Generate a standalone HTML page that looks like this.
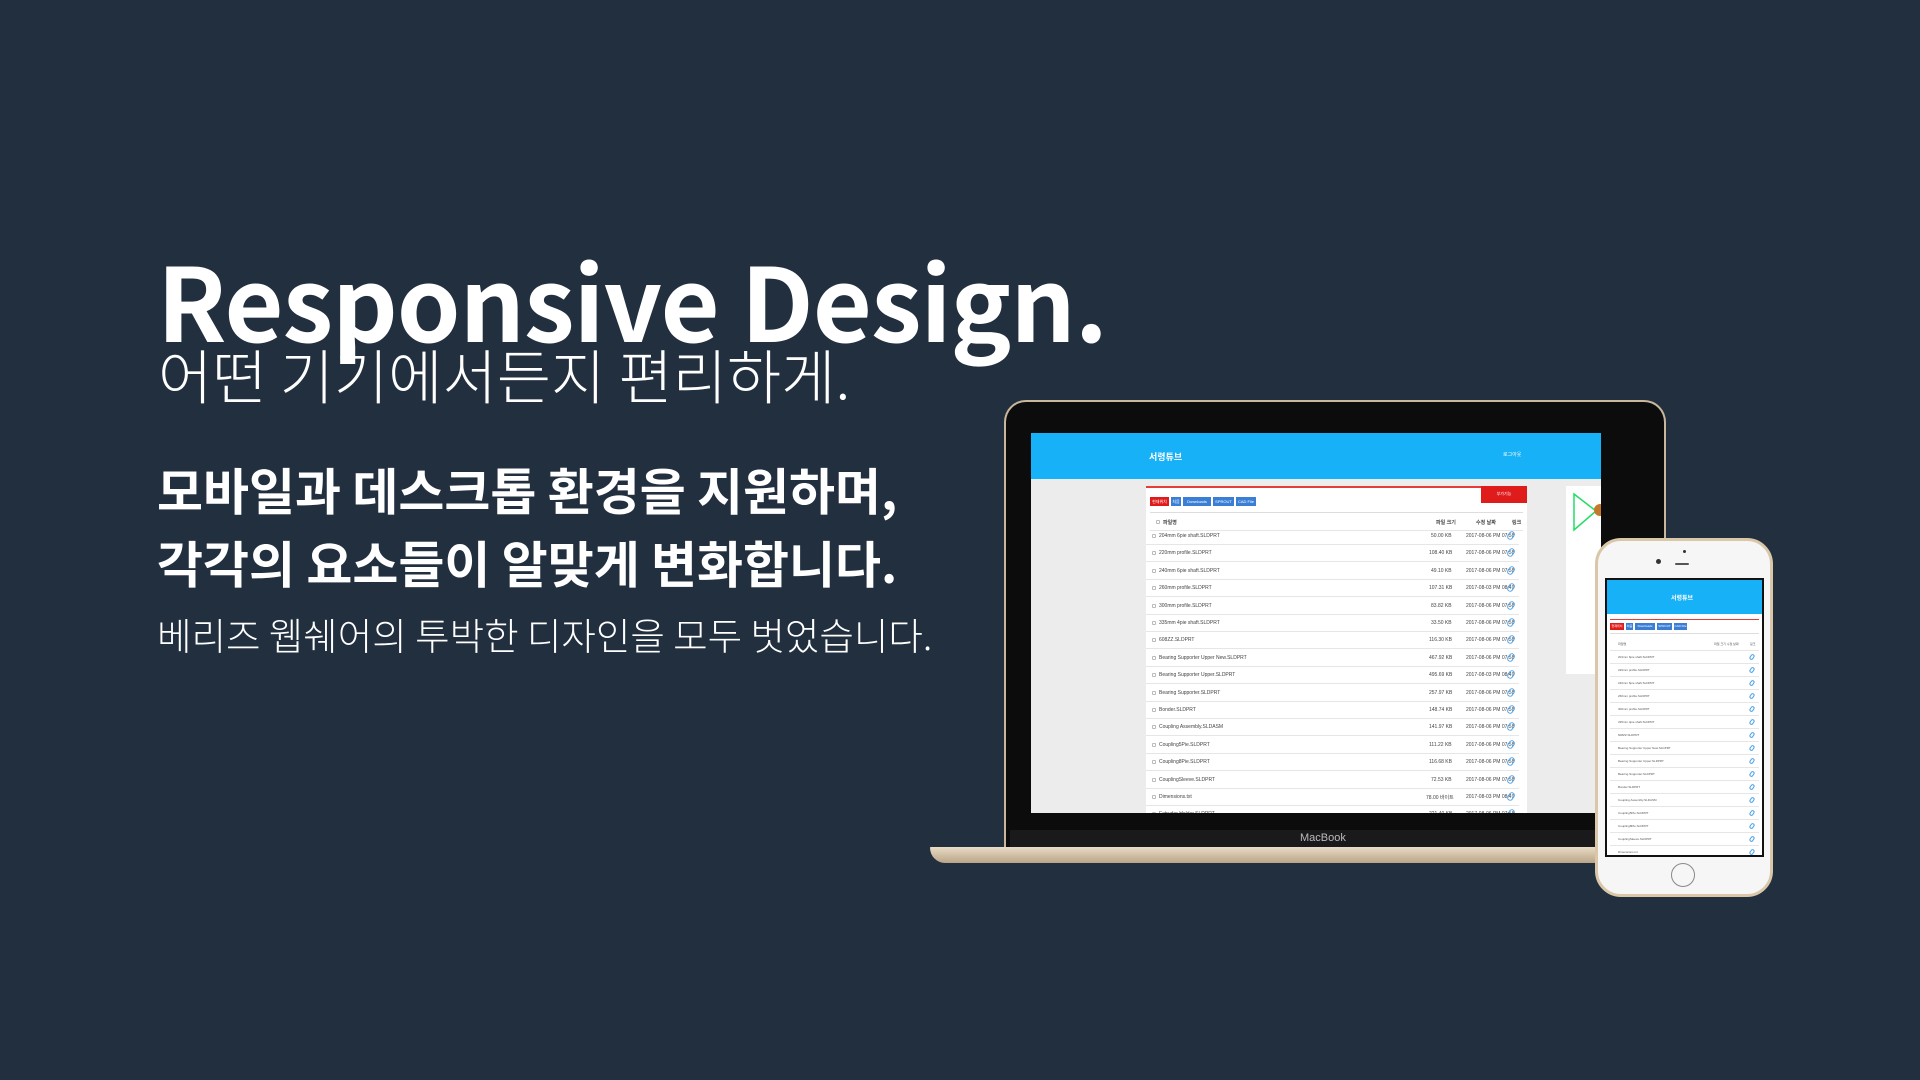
<!DOCTYPE html>
<html><head><meta charset="utf-8"><style>
*{margin:0;padding:0;box-sizing:border-box}
body{width:1920px;height:1080px;background:#222f3f;overflow:hidden;position:relative;font-family:"Liberation Sans","Noto Sans CJK KR",sans-serif;color:#fff}
.a{position:absolute;white-space:nowrap}
.k{font-family:"Noto Sans CJK KR","Liberation Sans",sans-serif}
.row{position:absolute;left:0;right:0;height:17px;border-bottom:1px solid #e6e6e6;font-size:5px;color:#444;font-family:"Liberation Sans",sans-serif}
.row span{position:absolute;top:5px}
.cb{position:absolute;left:6px;top:6px;width:4px;height:4px;border:1px solid #bbb;border-radius:1px}
.lk{position:absolute;top:3px;width:6px;height:9px;border:1.5px solid #4da3e8;border-radius:3px;transform:rotate(35deg)}
.prow{position:absolute;left:0;right:0;height:13px;border-bottom:1px solid #e6e6e6;font-size:3px;color:#555}
.prow span{position:absolute;top:4px}
.tab{position:absolute;top:0;height:9px;font-size:4px;color:#fff;line-height:9px;text-align:center;background:#3a7fd5}
</style></head><body>

<div class="a k" style="left:157px;top:238px;font-size:102px;font-weight:700;letter-spacing:-1px;line-height:1.2">Responsive Design.</div>
<div class="a k" style="left:158px;top:339px;font-size:59px;font-weight:300;line-height:1.2">어떤 기기에서든지 편리하게.</div>
<div class="a k" style="left:157px;top:459px;font-size:50px;font-weight:700;line-height:1.2">모바일과 데스크톱 환경을 지원하며,</div>
<div class="a k" style="left:157px;top:532px;font-size:50px;font-weight:700;line-height:1.2">각각의 요소들이 알맞게 변화합니다.</div>
<div class="a k" style="left:157px;top:611px;font-size:37.5px;font-weight:300;line-height:1.2">베리즈 웹쉐어의 투박한 디자인을 모두 벗었습니다.</div>

<!-- laptop -->
<div class="a" style="left:1004px;top:400px;width:662px;height:450px;background:#0c0c0d;border:2px solid #c9b79c;border-radius:22px 22px 0 0;border-bottom:none"></div>
<div class="a" style="left:1010px;top:830px;width:650px;height:18px;background:#1a1a1c"></div>
<div class="a" style="left:1300px;top:832px;font-size:11px;color:#bbb">MacBook</div>
<div class="a" style="left:930px;top:847px;width:680px;height:16px;background:linear-gradient(#e9dcc6,#b9a487);border-radius:2px 2px 40px 40px"></div>
<div class="a" style="left:1031px;top:433px;width:570px;height:380px;background:#ececec;overflow:hidden">
  <div class="a" style="left:0;top:0;width:570px;height:46px;background:#17b1f8"></div>
  <div class="a k" style="left:118px;top:17px;font-size:9px;font-weight:700">서령튜브</div>
  <div class="a k" style="left:472px;top:18px;font-size:5px">로그아웃</div>
  <div class="a" style="left:115px;top:53px;width:381px;height:340px;background:#fff;border-top:2px solid #e83c3c">
    <div class="a k" style="right:0;top:-2px;width:46px;height:17px;background:#e01b1b;font-size:4px;text-align:center;line-height:17px">부가기능</div>
    <div class="a" style="left:4px;top:9px;width:300px;height:9px">
      <div class="tab" style="left:0;width:19px;background:#e01b1b">현재위치</div>
      <div class="tab" style="left:21px;width:10px">처음</div>
      <div class="tab" style="left:33px;width:28px">Downloads</div>
      <div class="tab" style="left:63px;width:21px">SPROUT</div>
      <div class="tab" style="left:86px;width:20px">CAD File</div>
    </div>
    <div class="a" style="left:4px;top:24px;width:373px;height:1px;background:#ddd"></div>
    <div class="row" style="top:26px;left:4px;right:4px;font-weight:bold"><i class="cb"></i><span style="left:13px">파일명</span><span style="left:286px">파일 크기</span><span style="left:326px">수정 날짜</span><span style="left:362px">링크</span></div>
  </div>
  <div class="a" style="left:535px;top:53px;width:46px;height:188px;background:#fff"><svg width="46" height="60"><path d="M8 8 L30 25 L8 44 Z" fill="none" stroke="#2d6" stroke-width="1.5"/><circle cx="34" cy="24" r="6" fill="#c47a2a"/></svg></div>
</div>
<div class="a" style="left:1146px;top:528px;width:373px;height:285px;overflow:hidden">
<div class="row" style="top:0"><i class="cb"></i><span style="left:13px">204mm 6pie shaft.SLDPRT</span><span style="left:285px">50.00 KB</span><span style="left:320px">2017-08-06 PM 07:58</span><i class="lk" style="left:362px"></i></div>
<div class="row" style="top:17.4px"><i class="cb"></i><span style="left:13px">220mm profile.SLDPRT</span><span style="left:283px">108.40 KB</span><span style="left:320px">2017-08-06 PM 07:58</span><i class="lk" style="left:362px"></i></div>
<div class="row" style="top:34.8px"><i class="cb"></i><span style="left:13px">240mm 6pie shaft.SLDPRT</span><span style="left:285px">49.10 KB</span><span style="left:320px">2017-08-06 PM 07:58</span><i class="lk" style="left:362px"></i></div>
<div class="row" style="top:52.2px"><i class="cb"></i><span style="left:13px">260mm profile.SLDPRT</span><span style="left:283px">107.31 KB</span><span style="left:320px">2017-08-03 PM 08:49</span><i class="lk" style="left:362px"></i></div>
<div class="row" style="top:69.6px"><i class="cb"></i><span style="left:13px">300mm profile.SLDPRT</span><span style="left:285px">83.82 KB</span><span style="left:320px">2017-08-06 PM 07:58</span><i class="lk" style="left:362px"></i></div>
<div class="row" style="top:87px"><i class="cb"></i><span style="left:13px">335mm 4pie shaft.SLDPRT</span><span style="left:285px">33.50 KB</span><span style="left:320px">2017-08-06 PM 07:58</span><i class="lk" style="left:362px"></i></div>
<div class="row" style="top:104.4px"><i class="cb"></i><span style="left:13px">608ZZ.SLDPRT</span><span style="left:283px">116.30 KB</span><span style="left:320px">2017-08-06 PM 07:58</span><i class="lk" style="left:362px"></i></div>
<div class="row" style="top:121.8px"><i class="cb"></i><span style="left:13px">Bearing Supporter Upper New.SLDPRT</span><span style="left:283px">467.92 KB</span><span style="left:320px">2017-08-06 PM 07:58</span><i class="lk" style="left:362px"></i></div>
<div class="row" style="top:139.2px"><i class="cb"></i><span style="left:13px">Bearing Supporter Upper.SLDPRT</span><span style="left:283px">495.69 KB</span><span style="left:320px">2017-08-03 PM 08:49</span><i class="lk" style="left:362px"></i></div>
<div class="row" style="top:156.6px"><i class="cb"></i><span style="left:13px">Bearing Supporter.SLDPRT</span><span style="left:283px">257.97 KB</span><span style="left:320px">2017-08-06 PM 07:58</span><i class="lk" style="left:362px"></i></div>
<div class="row" style="top:174px"><i class="cb"></i><span style="left:13px">Bonder.SLDPRT</span><span style="left:283px">148.74 KB</span><span style="left:320px">2017-08-06 PM 07:58</span><i class="lk" style="left:362px"></i></div>
<div class="row" style="top:191.4px"><i class="cb"></i><span style="left:13px">Coupling Assembly.SLDASM</span><span style="left:283px">141.97 KB</span><span style="left:320px">2017-08-06 PM 07:58</span><i class="lk" style="left:362px"></i></div>
<div class="row" style="top:208.8px"><i class="cb"></i><span style="left:13px">Coupling5Pie.SLDPRT</span><span style="left:283px">111.22 KB</span><span style="left:320px">2017-08-06 PM 07:58</span><i class="lk" style="left:362px"></i></div>
<div class="row" style="top:226.2px"><i class="cb"></i><span style="left:13px">Coupling8Pie.SLDPRT</span><span style="left:283px">116.68 KB</span><span style="left:320px">2017-08-06 PM 07:58</span><i class="lk" style="left:362px"></i></div>
<div class="row" style="top:243.6px"><i class="cb"></i><span style="left:13px">CouplingSleeve.SLDPRT</span><span style="left:285px">72.53 KB</span><span style="left:320px">2017-08-06 PM 07:58</span><i class="lk" style="left:362px"></i></div>
<div class="row" style="top:261px"><i class="cb"></i><span style="left:13px">Dimensions.txt</span><span style="left:280px">78.00 바이트</span><span style="left:320px">2017-08-03 PM 08:49</span><i class="lk" style="left:362px"></i></div>
<div class="row" style="top:278.4px"><i class="cb"></i><span style="left:13px">Extruder Holder.SLDPRT</span><span style="left:283px">221.40 KB</span><span style="left:320px">2017-08-06 PM 07:58</span><i class="lk" style="left:362px"></i></div>
</div>

<!-- phone -->
<div class="a" style="left:1595px;top:538px;width:178px;height:359px;background:#f6f6f6;border:3px solid #d9c7a8;border-radius:26px"></div>
<div class="a" style="left:1675px;top:563px;width:14px;height:2px;background:#555;border-radius:1px"></div>
<div class="a" style="left:1683px;top:550px;width:3px;height:3px;background:#333;border-radius:50%"></div>
<div class="a" style="left:1656px;top:559px;width:5px;height:5px;background:#333;border-radius:50%"></div>
<div class="a" style="left:1671px;top:863px;width:24px;height:24px;border:1.5px solid #888;border-radius:50%"></div>
<div class="a" style="left:1605px;top:578px;width:159px;height:279px;background:#fff;border:2px solid #111;overflow:hidden">
  <div class="a" style="left:0;top:0;width:155px;height:34px;background:#17b1f8"></div>
  <div class="a k" style="left:64px;top:13px;font-size:6px;font-weight:700">서령튜브</div>
  <div class="a" style="left:3px;top:39px;width:149px;height:1px;background:#e83c3c"></div>
  <div class="a" style="left:3px;top:43px;width:150px;height:9px">
    <div class="tab" style="left:0;width:14px;height:7px;line-height:7px;font-size:3px;background:#e01b1b">현재위치</div>
    <div class="tab" style="left:16px;width:7px;height:7px;line-height:7px;font-size:3px">처음</div>
    <div class="tab" style="left:25px;width:20px;height:7px;line-height:7px;font-size:3px">Downloads</div>
    <div class="tab" style="left:47px;width:15px;height:7px;line-height:7px;font-size:3px">SPROUT</div>
    <div class="tab" style="left:64px;width:13px;height:7px;line-height:7px;font-size:3px">CAD File</div>
  </div>
  <div class="a" style="left:3px;top:53px;width:149px;height:1px;background:#ddd"></div>
  <div class="a" style="left:3px;top:58px;width:149px;height:220px">
    <div class="prow" style="top:0"><span style="left:8px">파일명</span><span style="left:104px">파일 크기 수정 날짜</span><span style="left:140px">링크</span></div>
    <div class="prow" style="top:13px"><span style="left:8px">204mm 6pie shaft.SLDPRT</span><i class="lk" style="left:140px;width:4px;height:6px;top:3px;border-width:1px"></i></div>
    <div class="prow" style="top:26px"><span style="left:8px">220mm profile.SLDPRT</span><i class="lk" style="left:140px;width:4px;height:6px;top:3px;border-width:1px"></i></div>
    <div class="prow" style="top:39px"><span style="left:8px">240mm 6pie shaft.SLDPRT</span><i class="lk" style="left:140px;width:4px;height:6px;top:3px;border-width:1px"></i></div>
    <div class="prow" style="top:52px"><span style="left:8px">260mm profile.SLDPRT</span><i class="lk" style="left:140px;width:4px;height:6px;top:3px;border-width:1px"></i></div>
    <div class="prow" style="top:65px"><span style="left:8px">300mm profile.SLDPRT</span><i class="lk" style="left:140px;width:4px;height:6px;top:3px;border-width:1px"></i></div>
    <div class="prow" style="top:78px"><span style="left:8px">335mm 4pie shaft.SLDPRT</span><i class="lk" style="left:140px;width:4px;height:6px;top:3px;border-width:1px"></i></div>
    <div class="prow" style="top:91px"><span style="left:8px">608ZZ.SLDPRT</span><i class="lk" style="left:140px;width:4px;height:6px;top:3px;border-width:1px"></i></div>
    <div class="prow" style="top:104px"><span style="left:8px">Bearing Supporter Upper New.SLDPRT</span><i class="lk" style="left:140px;width:4px;height:6px;top:3px;border-width:1px"></i></div>
    <div class="prow" style="top:117px"><span style="left:8px">Bearing Supporter Upper.SLDPRT</span><i class="lk" style="left:140px;width:4px;height:6px;top:3px;border-width:1px"></i></div>
    <div class="prow" style="top:130px"><span style="left:8px">Bearing Supporter.SLDPRT</span><i class="lk" style="left:140px;width:4px;height:6px;top:3px;border-width:1px"></i></div>
    <div class="prow" style="top:143px"><span style="left:8px">Bonder.SLDPRT</span><i class="lk" style="left:140px;width:4px;height:6px;top:3px;border-width:1px"></i></div>
    <div class="prow" style="top:156px"><span style="left:8px">Coupling Assembly.SLDASM</span><i class="lk" style="left:140px;width:4px;height:6px;top:3px;border-width:1px"></i></div>
    <div class="prow" style="top:169px"><span style="left:8px">Coupling5Pie.SLDPRT</span><i class="lk" style="left:140px;width:4px;height:6px;top:3px;border-width:1px"></i></div>
    <div class="prow" style="top:182px"><span style="left:8px">Coupling8Pie.SLDPRT</span><i class="lk" style="left:140px;width:4px;height:6px;top:3px;border-width:1px"></i></div>
    <div class="prow" style="top:195px"><span style="left:8px">CouplingSleeve.SLDPRT</span><i class="lk" style="left:140px;width:4px;height:6px;top:3px;border-width:1px"></i></div>
    <div class="prow" style="top:208px"><span style="left:8px">Dimensions.txt</span><i class="lk" style="left:140px;width:4px;height:6px;top:3px;border-width:1px"></i></div>
  </div>
</div>
</body></html>
